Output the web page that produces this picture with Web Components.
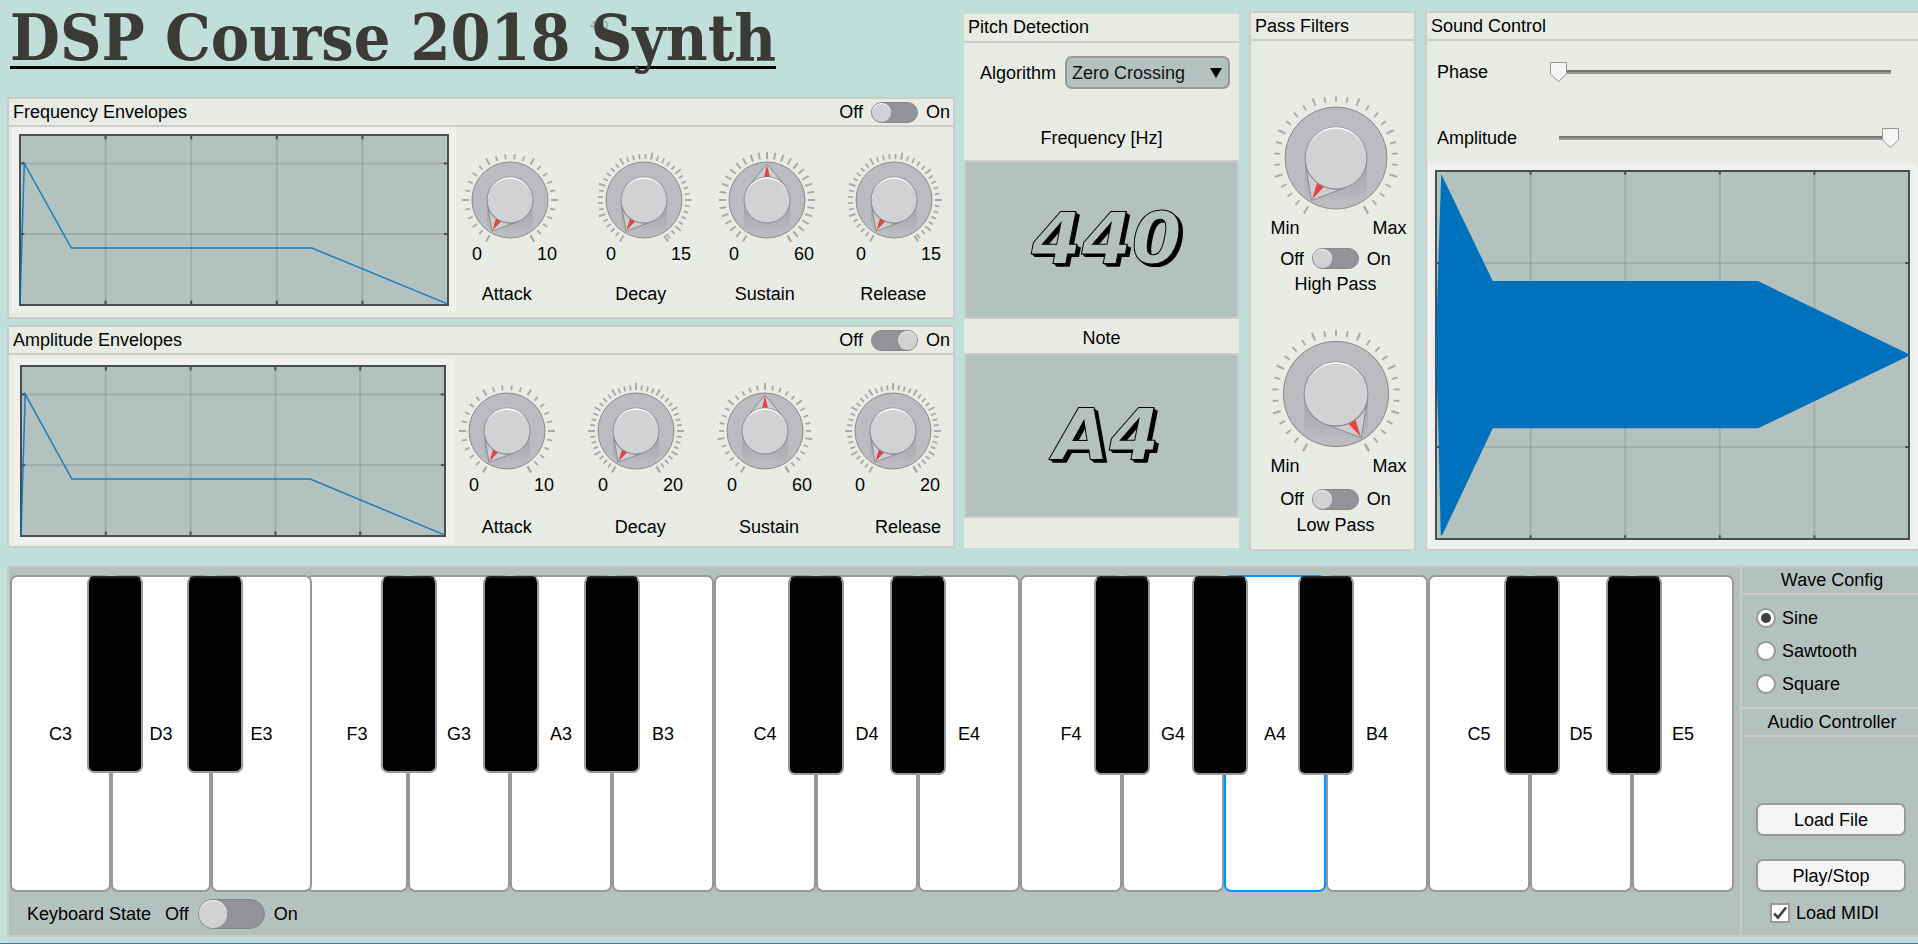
<!DOCTYPE html>
<html lang="en">
<head>
<meta charset="utf-8">
<title>DSP Course 2018 Synth</title>
<style>
  body {
    margin: 0;
    background: #c0dfd9;
    color: #000;
    font: 18px/20px "Liberation Sans", Arial, sans-serif;
  }
</style>
</head>
<body>
<synth-app></synth-app>

<script>
const define = (name, cls) => customElements.define(name, cls);

/* Base class: renders markup and styles in an open shadow root. */
class View extends HTMLElement {
  connectedCallback() {
    if (this.shadowRoot) return;
    const t = document.createElement('template');
    t.innerHTML = `<style>*{box-sizing:border-box}${this.css()}</style>${this.html()}`;
    this.attachShadow({ mode: 'open' }).append(t.content.cloneNode(true));
  }
  css() { return ''; }
  html() { return ''; }
  attr(n, d = '') { return this.getAttribute(n) ?? d; }
}

/* ---------- rotary knob drawing ---------- */
const polar = (a, r) => {
  const t = a * Math.PI / 180;
  return [(r * Math.sin(t)).toFixed(2), (-r * Math.cos(t)).toFixed(2)];
};
function knobSvg({ step, every, angle, big }) {
  const R = big ? 51 : 38, r = big ? 31 : 23, tip = big ? 49 : 36;
  const t0 = big ? 56 : 41, minor = big ? 62 : 46, major = big ? 64 : 48;
  let ticks = '';
  const line = (a, m) => {
    const [x1, y1] = polar(a, t0), [x2, y2] = polar(a, m ? major : minor);
    ticks += `<line x1="${x1}" y1="${y1}" x2="${x2}" y2="${y2}" stroke-width="${m ? 2 : 1.8}"/>`;
  };
  const n = Math.floor(300 / step + 1e-6);
  for (let i = 0; i <= n; i++) line(-150 + i * step, i % every === 0);
  line(150, true);
  const c = r / tip, ty = -r * c, tx = r * Math.sqrt(1 - c * c);
  const box = big ? '-65 -65 130 125' : '-49 -49 98 93';
  const base = big ? 4 : 3;
  return `<svg viewBox="${box}" aria-hidden="true">
    <defs>
      <linearGradient id="sh" x1="0" y1="0" x2="0" y2="1"><stop offset="0" stop-color="#a3a4a7"/><stop offset=".5" stop-color="#adaeb1"/><stop offset="1" stop-color="#bbbcbf"/></linearGradient>
      <linearGradient id="hl" x1="0" y1="0" x2="0" y2="1"><stop offset="0" stop-color="#fff"/><stop offset=".3" stop-color="#fff" stop-opacity="0"/></linearGradient>
    </defs>
    <g stroke="#a7a9ac">${ticks}</g>
    <circle r="${R}" fill="#bbbcbf" stroke="#8b8c90"/>
    <path d="M${-r} 0V${R * .62}Q${-r} ${R * .84} ${-r * .5} ${R * .88}H${r * .5}Q${r} ${R * .84} ${r} ${R * .62}V0Z" fill="url(#sh)"/>
    <g transform="rotate(${angle})">
      <path d="M0 ${-tip}L${tx} ${ty}A${r} ${r} 0 0 0 ${-tx} ${ty}Z" fill="#cdced0" stroke="#8b8c90"/>
      <path d="M0 ${-tip + 1}L${base} ${-r}H${-base}Z" fill="#e64545"/>
    </g>
    <circle r="${r}" fill="#d1d2d4" stroke="#8b8c90"/>
    <circle r="${r - 1}" fill="none" stroke="url(#hl)" stroke-width="1.5"/>
  </svg>`;
}
const knobCss = `
  .dial{position:relative}
  .dial svg{display:block;width:100%}
  .dial input{position:absolute;inset:0;width:100%;height:100%;margin:0;opacity:0;cursor:pointer}
  .ends{display:flex;justify-content:space-between}`;

/* ---------- panel with a title bar ---------- */
define('synth-panel', class extends View {
  css() { return `
    :host{display:block;background:#e9ece5;border:2px solid #ccc}
    header{display:flex;align-items:center;justify-content:space-between;height:28px;padding:0 3px 0 4px;border-bottom:2px solid #ccc}
    h2{margin:0;font:inherit}`; }
  html() { return `<header><h2>${this.attr('heading')}</h2><slot name="actions"></slot></header><slot></slot>`; }
});

/* ---------- Off / On switch ---------- */
define('synth-toggle', class extends View {
  css() { return `
    :host{display:flex;align-items:center;gap:8px;--w:47px;--h:21px;--k:19px}
    :host([large]){gap:9px;--w:67px;--h:30px;--k:28px}
    input{appearance:none;margin:0;width:var(--w);height:var(--h);border-radius:15px;background:#929397;border:1px solid #86878b;display:flex}
    input::before{content:"";width:var(--k);height:var(--k);border-radius:50%;background:#d1d2d4;box-shadow:inset 0 1px 1px #f4f4f5}
    input:checked{justify-content:flex-end}`; }
  html() { return `<span>Off</span><input type="checkbox" role="switch" aria-label="${this.attr('name')}" ${this.hasAttribute('on') ? 'checked' : ''}><span>On</span>`; }
});

/* ---------- plot with grid, used for envelopes and for the waveform ---------- */
define('wave-plot', class extends View {
  css() { return `
    :host{display:block;box-sizing:border-box;background:#f0f0f0;padding:8px}
    svg{display:block;width:100%;height:100%;overflow:visible}
    .grid{stroke:#000;stroke-opacity:.1;stroke-width:2}
    .tick{stroke:#4a4f4e;stroke-width:2}
    .frame{fill:none;stroke:#4a4f4e;stroke-width:2}
    polyline{fill:none;stroke:#0072bd;stroke-opacity:.85;stroke-width:1.5;vector-effect:non-scaling-stroke}
    polygon{fill:#0072bd}`; }
  html() {
    const wave = this.hasAttribute('wave');
    const ys = wave ? [25, 50, 75] : [16.7, 58.3];
    const dx = wave ? .8 : 1, dy = wave ? 1 : 2.6;
    const ln = (c, a, b, d, e) => `<line class="${c}" x1="${a}%" y1="${b}%" x2="${d}%" y2="${e}%"/>`;
    let g = '';
    for (const x of [20, 40, 60, 80]) g += ln('grid', x, 0, x, 100) + ln('tick', x, 0, x, dy) + ln('tick', x, 100 - dy, x, 100);
    for (const y of ys) g += ln('grid', 0, y, 100, y) + ln('tick', 0, y, dx, y) + ln('tick', 100 - dx, y, 100, y);
    const shape = wave
      ? '<polygon points="0,52 0,46 .5,25 1.1,.8 12,29.9 68.1,29.9 100,49.8 100,50.2 68.1,69.9 12,69.9 1.3,99 1,99 .5,70"/>'
      : '<polyline points="0,99.5 1,16.7 12,66.5 68.2,66.5 100,99.5"/>';
    return `<svg role="img" aria-label="${this.attr('name')}">
      <rect width="100%" height="100%" fill="#b3c2bf"/>${g}<rect class="frame" width="100%" height="100%"/>
      <svg width="100%" height="100%" viewBox="0 0 100 100" preserveAspectRatio="none" overflow="visible">${shape}</svg></svg>`;
  }
});

/* ---------- four ADSR knobs ---------- */
define('knob-bank', class extends View {
  css() { return `${knobCss}
    :host{display:block}
    .row{display:grid;grid-template-columns:var(--knobs)}
    .names{grid-template-columns:var(--names);margin-top:var(--name-gap,20px)}
    .knob:nth-child(1){grid-column:2}.knob:nth-child(2){grid-column:4}.knob:nth-child(3){grid-column:6}.knob:nth-child(4){grid-column:8}
    label:nth-child(1){grid-column:2}label:nth-child(2){grid-column:4}label:nth-child(3){grid-column:6}label:nth-child(4){grid-column:8}
    .ends{padding:0 2px 0 11px}`; }
  html() {
    const scales = { 10: [12, 5], 15: [8, 5], 20: [7.5, 4], 60: [10, 5], fine: [10, 1] };
    const names = ['Attack', 'Decay', 'Sustain', 'Release'];
    const max = this.attr('max').split(',');
    const knobs = names.map((n, i) => {
      const fine = n === 'Sustain' && this.hasAttribute('fine');
      const [step, every] = scales[fine ? 'fine' : max[i]];
      const v = n === 'Sustain' ? 30 : 0;
      return `<div class="knob"><div class="dial">${knobSvg({ step, every, angle: v ? 0 : -150 })}
        <input type="range" id="k${i}" min="0" max="${max[i]}" value="${v}"></div>
        <div class="ends"><span>0</span><span>${max[i]}</span></div></div>`;
    }).join('');
    return `<div class="row">${knobs}</div><div class="row names">${names.map((n, i) => `<label for="k${i}">${n}</label>`).join('')}</div>`;
  }
});

/* ---------- one pass filter: knob, switch, name ---------- */
define('pass-filter', class extends View {
  css() { return `${knobCss}
    :host{display:flex;flex-direction:column;align-items:center;padding-left:6px}
    .dial{width:var(--size,130px)}
    .ends{width:142px;padding-left:6px}
    synth-toggle{margin:var(--gap,10px) 0 5px}`; }
  html() {
    const name = this.attr('name');
    return `<div class="dial">${knobSvg({ step: 300 / 28, every: 4, angle: +this.attr('angle'), big: true })}
      <input type="range" id="cut" value="${+this.attr('angle') > 0 ? 100 : 0}"></div>
      <div class="ends"><span>Min</span><span>Max</span></div>
      <synth-toggle name="${name}"></synth-toggle><label for="cut">${name}</label>`;
  }
});

/* ---------- pitch detection column ---------- */
define('pitch-detection', class extends View {
  css() { return `
    :host{display:flex;flex-direction:column;background:#e9ece5;margin:3px 1px 3px 0}
    h2{margin:0;font:inherit;line-height:27px;height:29px;padding-left:4px;border-bottom:2px solid #ccc}
    .algo{display:flex;align-items:center;justify-content:space-between;padding:13px 9px 0 16px}
    select{appearance:none;width:165px;height:33px;padding:0 0 0 5px;border:2px solid #999;border-radius:7px;font:inherit;color:#111;
      background:#b3c2bf url('data:image/svg+xml,<svg xmlns="http://www.w3.org/2000/svg" width="12" height="10"><path d="M0 0h12L6 10z"/></svg>') no-repeat right 6px center}
    .cap{text-align:center}
    .hz{padding:39px 0 12px}
    .note{padding:9px 0 5px}
    output{display:flex;align-items:center;justify-content:center;padding:0 0 4px 10px;background:#b3c2bf;border:2px solid #ccc;height:159px;
      font:italic bold 72px/80px "DejaVu Sans","Liberation Sans",sans-serif;color:#b3c2bf;-webkit-text-stroke:1px #000;
      text-shadow:1px 1px #000,2px 2px #000,3px 3px #000,4px 3px #000}
    output.n{height:165px}`; }
  html() { return `<h2>Pitch Detection</h2>
    <div class="algo"><label for="a">Algorithm</label><select id="a"><option>Zero Crossing</option></select></div>
    <div class="cap hz">Frequency [Hz]</div><output aria-label="Frequency">440</output>
    <div class="cap note">Note</div><output class="n" aria-label="Note">A4</output>`; }
});

/* ---------- slider row ---------- */
define('synth-slider', class extends View {
  css() { return `
    :host{display:flex;align-items:center;justify-content:space-between;height:20px;padding:0 19px 0 10px}
    input{appearance:none;margin:0;width:349px;height:20px;
      background:linear-gradient(#777 50%,#999 50%) center/calc(100% - 17px) 4px no-repeat}
    input::-webkit-slider-thumb{appearance:none;width:17px;height:20px;
      background:url('data:image/svg+xml,<svg xmlns="http://www.w3.org/2000/svg" width="17" height="20"><path d="M.5.5h16v11.500l-8 7.500-8-7.500z" fill="%23f5f5f5" stroke="%23999"/></svg>')}`; }
  html() { return `<label for="s">${this.attr('name')}</label><input id="s" type="range" value="${this.attr('value')}">`; }
});

/* ---------- piano ---------- */
define('piano-keyboard', class extends View {
  css() { return `
    :host{display:block;padding:8px 0 0 1px}
    .keys{display:grid;grid-template-columns:101fr 100fr 101fr 96fr repeat(13,102fr);height:317px}
    .slot{position:relative;display:flex}
    button{margin:0;padding:0;font:inherit;color:#000;cursor:pointer}
    .white{flex:1;background:#fff;border:2px solid #999;border-radius:7px}
    .white.held{border-color:#0095ff}
    .slot:nth-child(3){z-index:1}
    .slot:nth-child(4) .white{margin-left:-6px}
    .black{position:absolute;z-index:2;top:1px;left:calc(100% - 28px + var(--shift,0px));width:56px;height:197px;background:#000;border:2px solid #999;border-top-color:#222;border-radius:7px}
    .slot:nth-child(n+8) .black{height:199px}
    .state{display:flex;align-items:center;height:43px;padding-left:17px}
    .state synth-toggle{margin-left:14px}`; }
  html() {
    const notes = 'C3 D3 E3 F3 G3 A3 B3 C4 D4 E4 F4 G4 A4 B4 C5 D5 E5'.split(' ');
    /* how far each sharp sits from the seam between its two white keys */
    const shift = { C3: 4, D3: 4, F3: 1, G3: 1, G4: -4, C5: 2, D5: 2 };
    const slots = notes.map(n => {
      const sharp = 'CDFGA'.includes(n[0]);
      return `<div class="slot" style="--shift:${shift[n] || 0}px"><button class="white${n === 'A4' ? ' held' : ''}">${n}</button>${sharp ? `<button class="black" aria-label="${n[0]} sharp ${n[1]}"></button>` : ''}</div>`;
    }).join('');
    return `<div class="keys">${slots}</div>
      <div class="state"><span>Keyboard State</span><synth-toggle large name="Keyboard State"></synth-toggle></div>`;
  }
});

/* ---------- wave and audio settings ---------- */
define('audio-settings', class extends View {
  css() { return `
    :host{display:flex;flex-direction:column;border-left:2px solid #ccc}
    h2{margin:0;font:inherit;height:28px;line-height:26px;text-align:center;padding-left:4px;border-bottom:2px solid #ccc}
    h2.second{border-top:2px solid #ccc;height:30px}
    fieldset{margin:0;border:0;padding:12px 0 17px 14px;display:grid;gap:12px;height:112px}
    label{display:flex;align-items:center;gap:6px;height:21px}
    input{appearance:none;margin:0;width:20px;height:20px;background:#fff;border:2px solid #999;display:grid;place-items:center}
    input[type=radio]{border-radius:50%}
    input[type=radio]:checked::before{content:"";width:10px;height:10px;border-radius:50%;background:#404040}
    input[type=checkbox]:checked{background:#fff url('data:image/svg+xml,<svg xmlns="http://www.w3.org/2000/svg" width="16" height="16"><path d="M2 8.500l4 4 8-10" fill="none" stroke="%23404040" stroke-width="2.600"/></svg>') center no-repeat}
    .actions{display:flex;flex-direction:column;gap:23px;padding:66px 12px 0 14px}
    button{height:33px;margin:0;background:#f5f5f5;border:2px solid #999;border-radius:7px;font:inherit;color:#000}
    .midi{margin:10px 0 0 28px}`; }
  html() { return `<h2>Wave Config</h2>
    <fieldset aria-label="Wave Config">
      <label><input type="radio" name="w" checked>Sine</label>
      <label><input type="radio" name="w">Sawtooth</label>
      <label><input type="radio" name="w">Square</label>
    </fieldset>
    <h2 class="second">Audio Controller</h2>
    <div class="actions"><button>Load File</button><button>Play/Stop</button></div>
    <label class="midi"><input type="checkbox" checked>Load MIDI</label>`; }
});

/* ---------- application ---------- */
define('synth-app', class extends View {
  css() { return `
    :host{display:block;padding:11px 0 0 7px}
    .top{display:grid;grid-template-columns:948fr 276fr 167fr 493fr;gap:9px;min-height:540px}
    .left{display:flex;flex-direction:column}
    h1{position:relative;align-self:flex-start;margin:0 0 28px 3px;height:58px;border-bottom:3px solid #000;white-space:nowrap;
      font:bold 64px/54px "DejaVu Serif Condensed","DejaVu Serif",serif;color:#3b3a36}
    h1 span{position:absolute;left:580px;top:8px;font:12px/12px "Liberation Serif",serif;opacity:.5}
    .env{display:grid;grid-template-columns:444fr 497fr;padding-left:3px}
    .env knob-bank{padding-top:24px}
    .freq{height:222px}
    .freq wave-plot{height:184px;padding-bottom:6px}
    .freq knob-bank{--knobs:5fr 98px 36fr 98px 25fr 98px 29fr 98px 10fr;--names:26fr auto 84fr auto 69fr auto 66fr auto 27fr}
    .amp{height:223px;margin-top:6px}
    .amp .env{grid-template-columns:440fr 500fr;padding-left:4px}
    .amp wave-plot{height:186px;margin-top:3px}
    .amp knob-bank{padding-top:27px;--name-gap:22px;--knobs:5fr 98px 31fr 98px 31fr 98px 30fr 98px 11fr;--names:29fr auto 84fr auto 74fr auto 77fr auto 12fr}
    .filters pass-filter{padding-top:52px}
    .filters pass-filter + pass-filter{padding-top:33px;--size:134px;--gap:13px}
    .sound{border-right:0}
    .sound synth-slider{margin-top:21px}
    .sound synth-slider + synth-slider{margin-top:46px}
    .sound wave-plot{height:385px;margin:15px 1px 0 1px;padding-bottom:9px}
    .bottom{display:grid;grid-template-columns:1725fr 6px 178fr;margin-top:14px;background:#b3c2bf;border:2px solid #ccc;border-right:0;height:372px}
    .bottom audio-settings{grid-column:3}
    footer{height:7px;margin-left:-7px;border-bottom:1px solid #4472c4}`; }
  html() { return `
    <div class="top">
      <div class="left">
        <h1>DSP Course 2018 Synth<span>440</span></h1>
        <synth-panel class="freq" heading="Frequency Envelopes">
          <synth-toggle slot="actions" name="Frequency Envelopes"></synth-toggle>
          <div class="env"><wave-plot name="Frequency envelope"></wave-plot><knob-bank max="10,15,60,15" fine></knob-bank></div>
        </synth-panel>
        <synth-panel class="amp" heading="Amplitude Envelopes">
          <synth-toggle slot="actions" name="Amplitude Envelopes" on></synth-toggle>
          <div class="env"><wave-plot name="Amplitude envelope"></wave-plot><knob-bank max="10,20,60,20"></knob-bank></div>
        </synth-panel>
      </div>
      <pitch-detection></pitch-detection>
      <synth-panel class="filters" heading="Pass Filters">
        <pass-filter name="High Pass" angle="-150"></pass-filter>
        <pass-filter name="Low Pass" angle="150"></pass-filter>
      </synth-panel>
      <synth-panel class="sound" heading="Sound Control">
        <synth-slider name="Phase" value="0"></synth-slider>
        <synth-slider name="Amplitude" value="100"></synth-slider>
        <wave-plot wave name="Waveform"></wave-plot>
      </synth-panel>
    </div>
    <div class="bottom"><piano-keyboard></piano-keyboard><audio-settings></audio-settings></div>
    <footer></footer>`; }
});
</script>
</body>
</html>
